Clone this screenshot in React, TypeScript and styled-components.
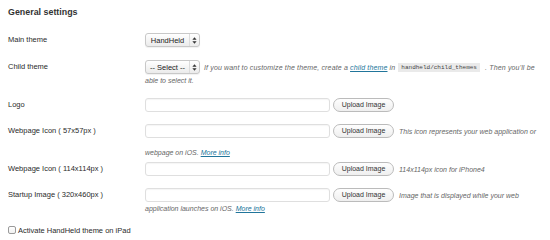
import React from "react";
import styled, { createGlobalStyle } from "styled-components";

const Global = createGlobalStyle`
  html, body { margin: 0; padding: 0; background: #fff; }
  body { font-family: "Liberation Sans", Arial, Helvetica, sans-serif; color: #333; }
  * { box-sizing: border-box; }
`;

const Page = styled.div`
  width: 550px;
  height: 240px;
  padding: 0 0 0 8px;
  overflow: hidden;
`;

const Title = styled.h3`
  margin: 6px 0 0;
  font-size: 8.9px;
  line-height: 12px;
  font-weight: bold;
  color: #333;
`;

const Row = styled.div<{ $mt: number }>`
  display: grid;
  grid-template-columns: 137px 1fr;
  margin-top: ${(p) => p.$mt}px;
  align-items: start;
`;

const Label = styled.div`
  font-size: 7.5px;
  line-height: 14px;
  color: #2a2a2a;
  white-space: nowrap;
`;

const Field = styled.div`
  display: flex;
  flex-direction: column;
`;

const Line = styled.div`
  display: flex;
  align-items: center;
  height: 14px;
`;

const SelectBox = styled.div`
  display: flex;
  align-items: stretch;
  width: 55px;
  height: 14px;
  border: 1px solid #c8c8c8;
  border-radius: 3px;
  background: linear-gradient(#ffffff, #ebebeb);
  box-shadow: 0 1px 1px rgba(0, 0, 0, 0.06);
`;

const SelectText = styled.span`
  flex: 1;
  display: flex;
  align-items: center;
  justify-content: center;
  font-size: 7.5px;
  color: #222;
  white-space: nowrap;
`;

const SelectArrows = styled.span`
  width: 10px;
  display: flex;
  align-items: center;
  justify-content: center;
  border-left: 1px solid #dcdcdc;
`;

const TextInput = styled.div`
  width: 185px;
  height: 14px;
  border: 1px solid #dfdfdf;
  border-radius: 3px;
  background: #fff;
  box-shadow: inset 0 1px 1px rgba(0, 0, 0, 0.04);
`;

const UploadButton = styled.button`
  margin-left: 3px;
  width: 61px;
  height: 14px;
  padding: 0;
  border: 1px solid #bbb;
  border-radius: 8px;
  background: linear-gradient(#fefefe, #efefef);
  font-family: "Liberation Sans", Arial, sans-serif;
  font-size: 7px;
  color: #333;
  line-height: 12px;
  white-space: nowrap;
`;

const Help = styled.span<{ $ml: number; $ls?: number }>`
  margin-left: ${(p) => p.$ml}px;
  font-size: 7px;
  font-style: italic;
  color: #666;
  white-space: pre;
  letter-spacing: ${(p) => p.$ls ?? 0}px;
  display: flex;
  align-items: center;
`;

const Continuation = styled.div<{ $mt: number }>`
  margin-top: ${(p) => p.$mt}px;
  font-size: 7px;
  line-height: 14px;
  font-style: italic;
  color: #666;
  white-space: nowrap;
`;

const Link = styled.a`
  color: #21759b;
  text-decoration: underline;
`;

const Code = styled.code`
  font-family: "Liberation Mono", "Courier New", monospace;
  font-style: normal;
  font-size: 6px;
  letter-spacing: 0;
  background: #eaeaea;
  color: #444;
  padding: 1px 3px;
  margin: 0 3px;
`;

const CheckRow = styled.label`
  display: flex;
  align-items: center;
  margin-top: 7px;
  height: 14px;
  font-size: 7.5px;
  color: #2a2a2a;
`;

const CheckBox = styled.span`
  width: 8px;
  height: 8px;
  border: 1px solid #9a9a9a;
  border-radius: 2px;
  background: linear-gradient(#fff, #f1f1f1);
  margin-right: 2px;
`;

const Arrows = () => (
  <svg width="5" height="7" viewBox="0 0 5 7">
    <path d="M2.5 0.3 L4.6 2.8 H0.4 Z" fill="#333" />
    <path d="M2.5 6.7 L4.6 4.2 H0.4 Z" fill="#333" />
  </svg>
);

const Select = ({ value }: { value: string }) => (
  <SelectBox>
    <SelectText>{value}</SelectText>
    <SelectArrows>
      <Arrows />
    </SelectArrows>
  </SelectBox>
);

export default function App() {
  return (
    <Page>
      <Global />
      <Title>General settings</Title>

      <Row $mt={15}>
        <Label>Main theme</Label>
        <Field>
          <Line>
            <Select value="HandHeld" />
          </Line>
        </Field>
      </Row>

      <Row $mt={13}>
        <Label>Child theme</Label>
        <Field>
          <Line>
            <Select value="-- Select --" />
            <Help $ml={4} $ls={0.15}>
              {"If you want to customize the theme, create a "}
              <Link href="#">child theme</Link>
              {" in"}
              <Code>handheld/child_themes</Code>
              {" . Then you'll be"}
            </Help>
          </Line>
          <Continuation $mt={0}>able to select it.</Continuation>
        </Field>
      </Row>

      <Row $mt={10}>
        <Label>Logo</Label>
        <Field>
          <Line>
            <TextInput />
            <UploadButton>Upload Image</UploadButton>
          </Line>
        </Field>
      </Row>

      <Row $mt={12}>
        <Label>Webpage Icon ( 57x57px )</Label>
        <Field>
          <Line>
            <TextInput />
            <UploadButton>Upload Image</UploadButton>
            <Help $ml={5}>This icon represents your web application or</Help>
          </Line>
          <Continuation $mt={8}>
            webpage on iOS. <Link href="#">More info</Link>
          </Continuation>
        </Field>
      </Row>

      <Row $mt={2}>
        <Label>Webpage Icon ( 114x114px )</Label>
        <Field>
          <Line>
            <TextInput />
            <UploadButton>Upload Image</UploadButton>
            <Help $ml={5}>114x114px icon for iPhone4</Help>
          </Line>
        </Field>
      </Row>

      <Row $mt={12}>
        <Label>Startup Image ( 320x460px )</Label>
        <Field>
          <Line>
            <TextInput />
            <UploadButton>Upload Image</UploadButton>
            <Help $ml={5}>Image that is displayed while your web</Help>
          </Line>
          <Continuation $mt={0}>
            application launches on iOS. <Link href="#">More info</Link>
          </Continuation>
        </Field>
      </Row>

      <CheckRow>
        <CheckBox />
        Activate HandHeld theme on iPad
      </CheckRow>
    </Page>
  );
}
